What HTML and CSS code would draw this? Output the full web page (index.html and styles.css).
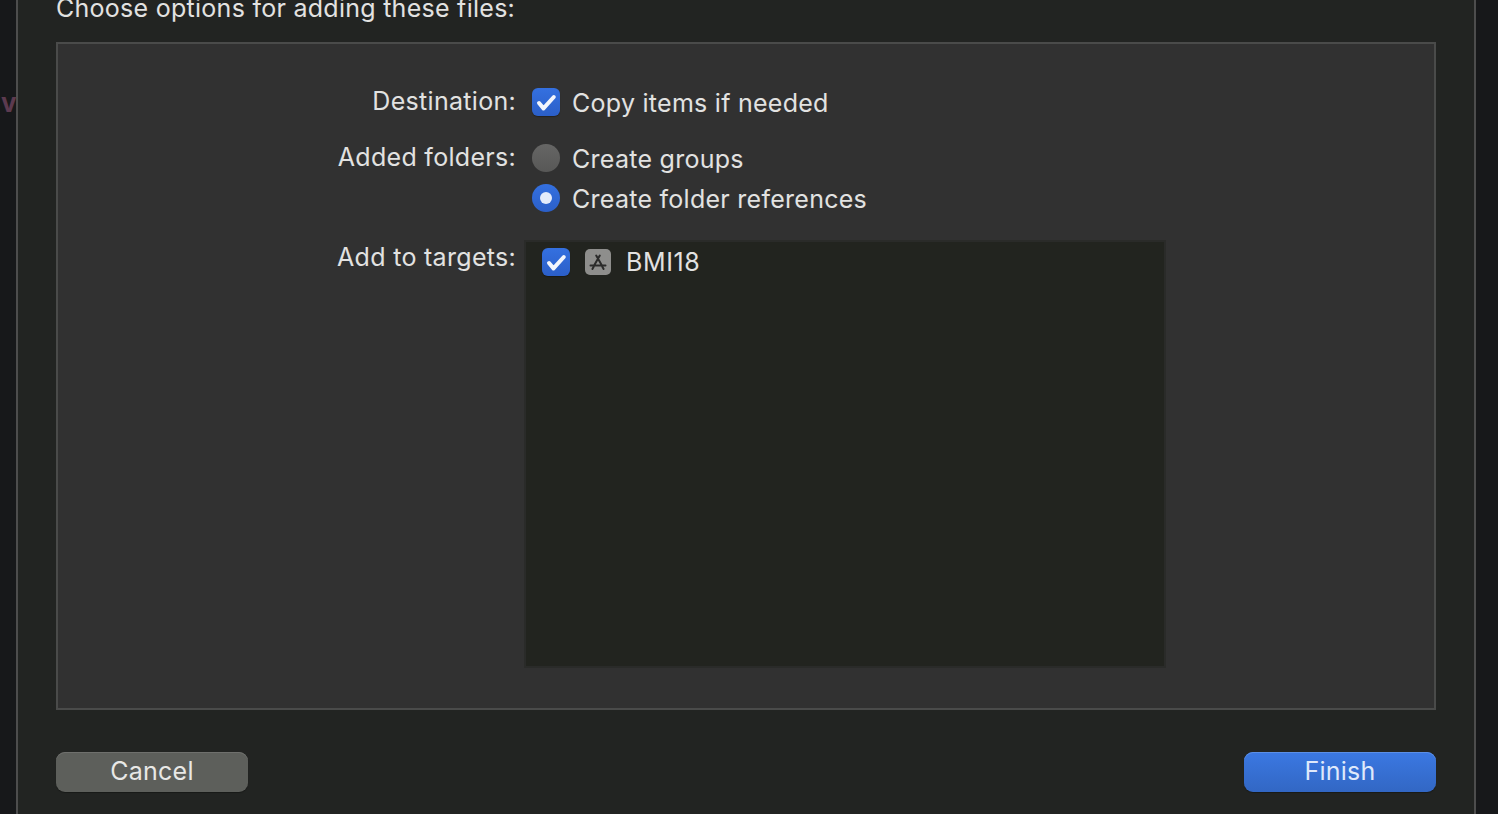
FILE: index.html
```html
<!DOCTYPE html>
<html lang="en">
<head>
<meta charset="utf-8">
<title>Choose options for adding these files</title>
<link rel="stylesheet" href="styles.css">
</head>
<body>
<div class="screen">
  <div class="backdrop-left"><span class="backdrop-letter">v</span></div>
  <main class="sheet">
    <h1 class="title">Choose options for adding these files:</h1>
    <section class="panel">
      <div class="form">
        <div class="label">Destination:</div>
        <div class="controls">
          <label class="option">
            <span class="checkbox"><svg viewBox="0 0 28 28" class="check"><path d="M7 15l4.5 5.4L21.8 9"/></svg></span>
            <span class="option-text">Copy items if needed</span>
          </label>
        </div>
        <div class="label">Added folders:</div>
        <div class="controls radios">
          <label class="option">
            <span class="radio"></span>
            <span class="option-text">Create groups</span>
          </label>
          <label class="option">
            <span class="radio radio-on"><span class="radio-dot"></span></span>
            <span class="option-text">Create folder references</span>
          </label>
        </div>
        <div class="label label-targets">Add to targets:</div>
        <div class="targets">
          <div class="target-row">
            <span class="checkbox"><svg viewBox="0 0 28 28" class="check"><path d="M7 15l4.5 5.4L21.8 9"/></svg></span>
            <span class="app-icon">
              <svg viewBox="0 0 26 26" class="app-glyph"><path d="M14.8 6.5L8.5 17.5M11.2 6.5l6.3 11M5.5 16.4h15M7.4 20l1.4-2.4M18.6 20l-1.4-2.4"/></svg>
            </span>
            <span class="target-name">BMI18</span>
          </div>
        </div>
      </div>
    </section>
    <footer class="actions">
      <button class="btn btn-cancel" type="button">Cancel</button>
      <button class="btn btn-finish" type="button">Finish</button>
    </footer>
  </main>
  <div class="backdrop-right"></div>
</div>
</body>
</html>
```
FILE: styles.css
```css
* { box-sizing: border-box; }
html, body { margin: 0; height: 100%; overflow: hidden; }
body {
  background: #17181a;
  font-family: Inter, "Liberation Sans", sans-serif;
  color: #e2e2e1;
}
.screen { display: flex; width: 1498px; height: 814px; overflow: hidden; }
.backdrop-left {
  width: 16px;
  flex: none;
  padding-top: 89px;
  background: #17181a;
}
.backdrop-letter {
  display: block;
  font: 700 26px/28px Inter, sans-serif;
  color: #5c3a4f;
  padding-left: 1px;
}
.backdrop-right { flex: 1; background: #17181a; }
.sheet {
  width: 1460px;
  flex: none;
  height: 814px;
  background: #222422;
  border-left: 2px solid #4d4d4d;
  border-right: 2px solid #4d4d4d;
  padding: 0 38px;
}
.title {
  margin: 0;
  height: 42px;
  font-size: 25px;
  letter-spacing: .27px;
  font-weight: 400;
  line-height: 17px;
  color: #e2e2e1;
}
.panel {
  height: 668px;
  background: #313131;
  border: 2px solid #4a4b4a;
  padding-top: 44px;
}
.form {
  display: grid;
  grid-template-columns: 458px 1fr;
  column-gap: 16px;
  row-gap: 28px;
  align-items: start;
}
.label {
  text-align: right;
  font-size: 25px;
  letter-spacing: .3px;
  line-height: 26px;
  color: #e2e2e1;
}
.label-targets { padding-top: 4px; }
.controls { display: flex; flex-direction: column; }
.radios { gap: 12px; }
.option { display: flex; align-items: center; gap: 12px; height: 28px; }
.option-text { font-size: 25px; letter-spacing: .27px; line-height: 28px; position: relative; top: 1px; }
.checkbox {
  flex: none;
  width: 28px;
  height: 28px;
  border-radius: 6px;
  background: linear-gradient(#3470e0, #2b5fc8);
  box-shadow: 0 1px 1px rgba(0, 0, 0, .3);
}
.check { display: block; width: 28px; height: 28px; fill: none; stroke: #f2f5fc; stroke-width: 4; stroke-linecap: round; stroke-linejoin: round; }
.radio {
  flex: none;
  display: flex;
  align-items: center;
  justify-content: center;
  width: 28px;
  height: 28px;
  border-radius: 50%;
  background: linear-gradient(#666665, #585857);
}
.radio-on { background: linear-gradient(#3470e0, #2b5fc8); }
.radio-dot { width: 12px; height: 12px; border-radius: 50%; background: #e3ebfb; }
.targets {
  width: 642px;
  height: 428px;
  margin-left: -8px;
  background: #22241f;
  border: 2px solid #2a2b29;
  padding: 6px 16px;
}
.target-row { display: flex; align-items: center; height: 28px; }
.app-icon {
  flex: none;
  width: 26px;
  height: 26px;
  margin-left: 15px;
  border-radius: 5px;
  background: #8e8e8c;
}
.app-glyph { display: block; width: 26px; height: 26px; fill: none; stroke: #2b2b2a; stroke-width: 2; stroke-linecap: round; }
.target-name { margin-left: 15px; font-size: 25px; letter-spacing: .6px; line-height: 26px; }
.actions { display: flex; justify-content: space-between; margin-top: 42px; }
.btn {
  width: 192px;
  height: 40px;
  border: 0;
  border-radius: 9px;
  font-family: Inter, "Liberation Sans", sans-serif;
  font-size: 25px;
  letter-spacing: .27px;
  padding: 0 0 2px;
}
.btn-cancel { background: #5d5f5b; color: #e8e8e6; box-shadow: inset 0 1px 0 #6f706d, 0 1px 1px rgba(0, 0, 0, .3); }
.btn-finish { background: linear-gradient(#3b78e2, #3267c4); color: #dfe9fb; box-shadow: inset 0 1px 0 #5b8fe6, 0 1px 1px rgba(0, 0, 0, .3); }
```
